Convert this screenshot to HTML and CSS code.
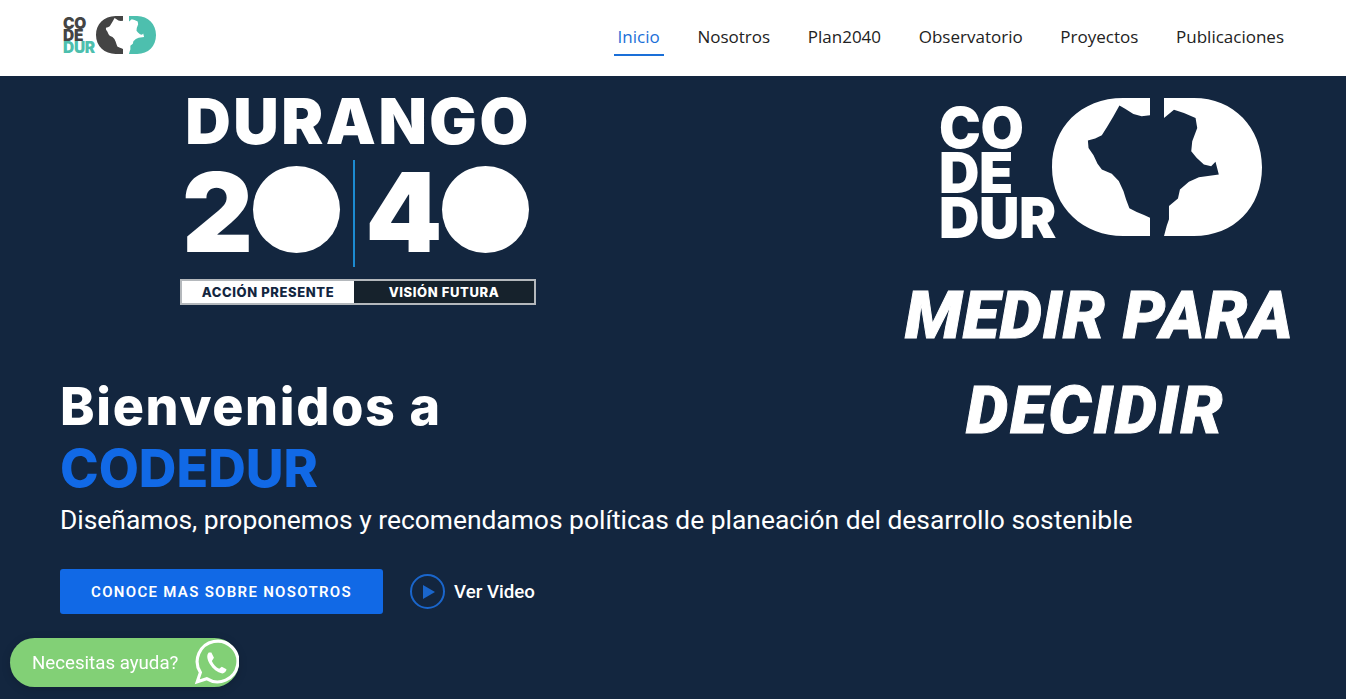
FILE: index.html
```html
<!DOCTYPE html>
<html lang="es">
<head>
    <meta charset="UTF-8">
    <meta name="viewport" content="width=device-width, initial-scale=1.0">
    <title>CODEDUR</title>
    <link rel="stylesheet" href="styles.css">
</head>
<body>
    <svg class="defs" width="0" height="0">
        <symbol id="mark-left" viewBox="395 40 295 415">
            <path d="M690 40 L610 40 C480 40 395 130 395 248 C395 370 490 455 610 455 L690 455 L690 400 L672 392 L650 383 L628 372 L618 345 L610 320 L596 290 L575 268 L545 255 L532 238 L520 212 L505 190 L503 168 L525 162 L545 152 L562 125 L580 95 L598 62 L615 72 L640 88 L665 95 L690 92 Z"/>
        </symbol>
        <symbol id="mark-right" viewBox="730 40 295 415">
            <path d="M730 40 L820 40 C940 40 1025 130 1025 248 C1025 370 940 455 820 455 L730 455 L738 425 L745 405 L745 365 L772 342 L778 315 L805 292 L835 278 L895 270 L885 232 L872 245 L850 240 L828 220 L812 200 L815 170 L830 130 L825 100 L790 85 L760 75 L730 100 Z"/>
        </symbol>
    </svg>

    <header class="header">
        <a class="brand" href="#">
            <span class="brand-text">CO<br>DE<br><em>DUR</em></span>
            <span class="brand-mark">
                <svg class="brand-left"><use href="#mark-left"/></svg>
                <svg class="brand-right"><use href="#mark-right"/></svg>
            </span>
        </a>
        <nav class="nav">
            <a class="active" href="#">Inicio</a>
            <a href="#">Nosotros</a>
            <a href="#">Plan2040</a>
            <a href="#">Observatorio</a>
            <a href="#">Proyectos</a>
            <a href="#">Publicaciones</a>
        </nav>
    </header>

    <main class="hero">
        <div class="hero-left">
            <div class="durango">
                <div class="durango-title">DURANGO</div>
                <div class="durango-year">
                    <span class="digit">2</span>
                    <span class="zero"></span>
                    <span class="divider"></span>
                    <span class="digit">4</span>
                    <span class="zero"></span>
                </div>
                <div class="durango-band">
                    <span class="band-light">ACCIÓN PRESENTE</span>
                    <span class="band-dark">VISIÓN FUTURA</span>
                </div>
            </div>
            <h1><span class="welcome">Bienvenidos a</span><br><span class="name">CODEDUR</span></h1>
            <p class="tagline">Diseñamos, proponemos y recomendamos políticas de planeación del desarrollo sostenible</p>
            <div class="actions">
                <a class="btn" href="#">CONOCE MAS SOBRE NOSOTROS</a>
                <a class="video" href="#">
                    <span class="play"><svg width="12" height="14" viewBox="0 0 12 14"><path d="M0 0 L12 7 L0 14 Z"/></svg></span>
                    Ver Video
                </a>
            </div>
        </div>
        <div class="hero-right">
            <div class="big-logo">
                <span class="big-text">CO<br>DE<br>DUR</span>
                <span class="big-mark">
                    <svg class="big-left"><use href="#mark-left"/></svg>
                    <svg class="big-right"><use href="#mark-right"/></svg>
                </span>
            </div>
            <h2>MEDIR PARA<br><span class="decidir">DECIDIR</span></h2>
        </div>
    </main>

    <a class="help" href="#">
        Necesitas ayuda?
        <svg width="48" height="48" viewBox="0 0 46 46">
            <path class="wa-ring" d="M6 41 L9 32 A19.5 19.5 0 1 1 15 38 Z"/>
            <path class="wa-phone" d="M17 13 C15 15 15 19 18 24 C21 29 25 32 30 33 C32 33 34 31 34 29 L29.5 26.5 L27 28.5 C24 27 21 24 20 21 L22 18 L19.5 13 Z"/>
        </svg>
    </a>
</body>
</html>
```

FILE: styles.css
```css
* {
    box-sizing: border-box;
}

body {
    margin: 0;
    height: 699px;
    overflow: hidden;
    background-color: #13263f;
    font-family: "Roboto", sans-serif;
}

a {
    text-decoration: none;
}

.defs {
    display: block;
    height: 0;
}

.header {
    display: flex;
    justify-content: space-between;
    align-items: center;
    height: 76px;
    padding: 0 58px 0 63px;
    background: #fff;
}

.brand {
    display: flex;
    align-items: flex-end;
    margin-bottom: 6px;
}

.brand-text {
    font-family: "Inter", sans-serif;
    font-weight: 900;
    font-size: 15.5px;
    line-height: 12px;
    letter-spacing: -0.3px;
    color: #444;
}

.brand-text em {
    font-style: normal;
    color: #4dbfae;
}

.brand-mark {
    display: flex;
    gap: 4px;
}

.brand-mark svg {
    width: 29px;
    height: 38px;
}

.brand-left {
    fill: #444;
}

.brand-right {
    fill: #4dbfae;
}

.nav {
    display: flex;
    gap: 29.7px;
    margin-bottom: 4px;
}

.nav a {
    padding: 8px 4px 6px;
    font-family: "Open Sans", sans-serif;
    font-size: 17px;
    font-weight: 500;
    line-height: 23px;
    color: #222;
    border-bottom: 2px solid transparent;
}

.nav a.active {
    color: #1a6fd8;
    border-bottom-color: #1a6fd8;
}

.hero {
    display: flex;
    justify-content: space-between;
    height: 623px;
    padding: 19px 60px 0;
    color: #fff;
}

.hero-left {
    width: 1072px;
    flex: none;
}

.durango {
    width: 356px;
    margin-left: 120px;
}

.durango-title {
    font-family: "Inter", sans-serif;
    font-weight: 900;
    font-size: 63px;
    line-height: 52px;
    letter-spacing: 2.5px;
    text-align: center;
    white-space: nowrap;
}

.durango-year {
    display: flex;
    align-items: center;
    height: 107px;
    margin-top: 13px;
    padding-left: 2px;
}

.digit {
    margin-bottom: 2px;
    font-family: "Inter", sans-serif;
    font-weight: 900;
    font-size: 110px;
    line-height: 107px;
}

.zero {
    flex: none;
    width: 87px;
    height: 87px;
    margin-bottom: 8px;
    border-radius: 50%;
    background: #fff;
}

.divider {
    flex: none;
    width: 2px;
    height: 107px;
    margin: 0 10px 0 13px;
    background: #1c8ad0;
}

.durango-band {
    display: flex;
    height: 26px;
    margin-top: 12px;
    border: 2px solid #b4b8bc;
    font-family: "Inter", sans-serif;
    font-size: 13px;
    font-weight: 800;
    letter-spacing: 0.6px;
    line-height: 22px;
    text-align: center;
}

.band-light {
    width: 172px;
    background: #fff;
    color: #13263f;
}

.band-dark {
    flex: 1;
    background: #16222c;
}

h1 {
    margin: 71px 0 0;
    font-family: "Inter", sans-serif;
    font-size: 52px;
    font-weight: 800;
    line-height: 62px;
}

.welcome {
    letter-spacing: 1.7px;
}

.name {
    color: #1169e6;
}

.tagline {
    margin: 3px 0 0;
    font-size: 26.4px;
    font-weight: 400;
    line-height: 34px;
    white-space: nowrap;
}

.actions {
    display: flex;
    align-items: center;
    gap: 27px;
    margin-top: 32px;
}

.btn {
    display: block;
    width: 323px;
    height: 45px;
    border-radius: 3px;
    background: #1169e6;
    color: #fff;
    font-size: 15px;
    font-weight: 600;
    letter-spacing: 1.3px;
    line-height: 46px;
    text-align: center;
}

.video {
    display: flex;
    align-items: center;
    gap: 9px;
    color: #fff;
    font-size: 18.7px;
    font-weight: 500;
}

.play {
    display: flex;
    align-items: center;
    justify-content: center;
    width: 35px;
    height: 35px;
    padding-left: 2px;
    border: 2px solid #1a66cc;
    border-radius: 50%;
    fill: #1a66cc;
}

.hero-right {
    width: 386px;
    flex: none;
    margin-left: -227px;
    text-align: center;
}

.big-logo {
    display: flex;
    align-items: flex-end;
    justify-content: center;
    margin: 3px 0 0 5px;
}

.big-text {
    margin-bottom: -5px;
    font-family: "Inter", sans-serif;
    font-weight: 900;
    font-size: 56px;
    line-height: 45px;
    letter-spacing: -0.5px;
    text-align: left;
}

.big-mark {
    display: flex;
    gap: 14px;
    margin-left: -4px;
}

.big-mark svg {
    width: 98px;
    height: 138px;
    fill: #fff;
}

h2 {
    margin: 32px 0 0;
    font-size: 67px;
    font-style: italic;
    font-weight: 900;
    line-height: 95px;
    letter-spacing: 0.7px;
    white-space: nowrap;
    -webkit-text-stroke: 1px #fff;
}

.decidir {
    margin-right: 5px;
    letter-spacing: 2px;
}

.help {
    position: fixed;
    left: 10px;
    top: 638px;
    display: flex;
    align-items: center;
    justify-content: space-between;
    width: 229px;
    height: 49px;
    padding: 0 0 0 22px;
    border-radius: 25px;
    background: #82d076;
    color: #fff;
    font-size: 18.7px;
    box-shadow: 0 2px 10px rgba(0, 0, 0, 0.15);
}

.wa-ring {
    fill: none;
    stroke: #fff;
    stroke-width: 3;
}

.wa-phone {
    fill: #fff;
}
```
